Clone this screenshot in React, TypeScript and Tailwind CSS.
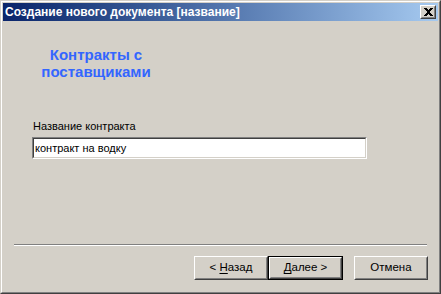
import React from "react";

const raised =
  "border border-t-white border-l-white border-r-[#404040] border-b-[#404040]";
const raisedInner = "border border-t-[#d4d0c8] border-l-[#d4d0c8] border-r-[#808080] border-b-[#808080]";

function Button({ label, hotkey, rest, isDefault }: { label?: string; hotkey?: string; rest: string; isDefault?: boolean }) {
  const face = (
    <div className={`${raised} h-full`}>
      <div className={`${raisedInner} h-full flex items-center justify-center text-[11.5px] text-black whitespace-pre`}>
        {label}
        {hotkey && <span className="underline underline-offset-[2px]">{hotkey}</span>}
        {rest}
      </div>
    </div>
  );
  if (isDefault) {
    return <div className="w-[75px] h-[24px] border border-black">{face}</div>;
  }
  return <div className="w-[74px] h-[24px]">{face}</div>;
}

export default function App() {
  return (
    <div
      className="w-[441px] h-[294px] bg-[#d4d0c8] border border-t-[#d4d0c8] border-l-[#d4d0c8] border-r-[#404040] border-b-[#404040]"
      style={{ fontFamily: '"Liberation Sans", Arial, sans-serif' }}
    >
      <div className="h-full border border-t-white border-l-white border-r-[#808080] border-b-[#808080] p-px flex flex-col">
        {/* title bar */}
        <div className="h-[18px] flex items-center justify-between pl-[2px] pr-[2px] bg-gradient-to-r from-[#0a246a] to-[#a6caf0]">
          <span className="text-white font-bold text-[12px] leading-none">Создание нового документа [название]</span>
          <div className={`w-[16px] h-[14px] bg-[#d4d0c8] ${raised}`}>
            <div className={`${raisedInner} h-full flex items-center justify-center`}>
              <svg width="9" height="8" viewBox="0 0 9 8" shapeRendering="crispEdges">
                <path
                  d="M0 0h3v1h-3zM6 0h3v1h-3zM1 1h3v1h-3zM5 1h3v1h-3zM2 2h5v1h-5zM3 3h3v2h-3zM2 5h5v1h-5zM1 6h3v1h-3zM5 6h3v1h-3zM0 7h3v1h-3zM6 7h3v1h-3z"
                  fill="#000"
                />
              </svg>
            </div>
          </div>
        </div>

        {/* content */}
        <div className="flex-1 flex flex-col">
          <div className="ml-[13px] mt-[25px] w-[160px] text-center text-[15px] leading-[17px] font-bold text-[#3366ff]">
            Контракты с<br />поставщиками
          </div>

          <div className="ml-[30px] mt-[40px] text-[11px] leading-[13px] text-black">Название контракта</div>
          <div className="ml-[29px] mt-[4px] w-[335px] h-[22px] border border-t-[#808080] border-l-[#808080] border-r-white border-b-white">
            <div className="h-full border border-t-[#404040] border-l-[#404040] border-r-[#d4d0c8] border-b-[#d4d0c8] bg-white flex items-center pl-px text-[11px] text-black">
              контракт на водку
            </div>
          </div>

          <div className="mx-[11px] mt-[85px] border-t border-t-[#808080] border-b border-b-white" />

          <div className="mt-[10px] flex justify-end pr-[10px]">
            <Button label="< " hotkey="Н" rest="азад" />
            <Button hotkey="Д" rest="алее >" isDefault />
            <div className="w-[11px]" />
            <Button rest="Отмена" />
          </div>
        </div>
      </div>
    </div>
  );
}
